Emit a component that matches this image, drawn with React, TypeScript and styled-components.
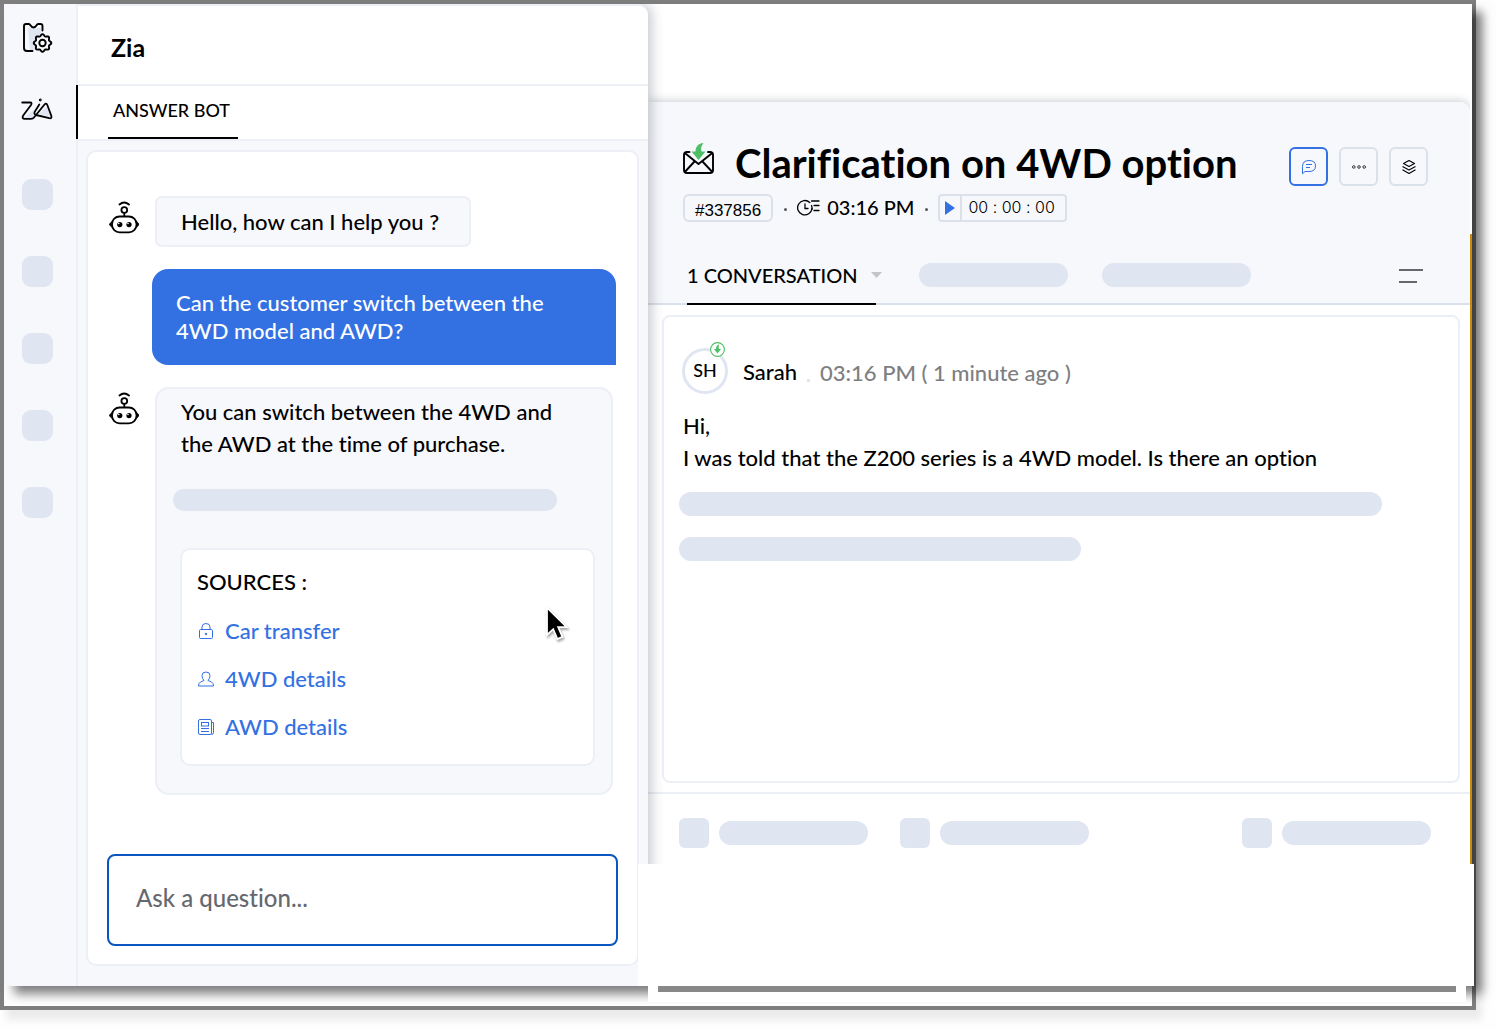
import React from "react";
import styled, { createGlobalStyle } from "styled-components";

const c = {
  mist: "#f7f8fc",
  line: "#eceff5",
  rule: "#dbe1ea",
  block: "#dfe5f1",
  blue: "#3371e3",
  deep: "#0a55bf",
  ink: "#000000",
  green: "#4fbf67",
};

const GlobalStyle = createGlobalStyle`
  *, *::before, *::after { box-sizing: border-box; }
  body {
    margin: 0;
    background: #fefefe;
    color: ${c.ink};
    font-family: Lato, "Liberation Sans", sans-serif;
    font-size: 22px;
    font-weight: 500;
    line-height: 32px;
    font-variant-ligatures: none;
  }
  button, input { font: inherit; color: inherit; font-variant-ligatures: none; }
  h1, h2, h3, p, ul { margin: 0; padding: 0; font-size: inherit; font-weight: inherit; }
  svg { display: block; flex: none; }
`;

const Frame = styled.div`
  display: flex;
  flex-direction: column;
  min-height: calc(100vh - 20px);
  margin: 0 20px 20px 0;
  border: 4px solid #7f7f7f;
  background: #fff;
  box-shadow: 6px 10px 8px rgba(0, 0, 0, 0.08);
`;

const Canvas = styled.div`
  flex: 1;
  display: flex;
  background: #fff;
  box-shadow: 10px 8px 10px rgba(0, 0, 0, 0.5);
`;

const Base = styled.div`
  position: relative;
  height: 16px;
  margin: 0 6px 4px 644px;
  padding: 0 10px;
  background: #fff;
`;

const BaseBar = styled.div`
  height: 6px;
  background: #888;
`;

/* left rail */

const Rail = styled.nav`
  width: 74px;
  padding-top: 7px;
  display: flex;
  flex-direction: column;
  background: ${c.mist};
  border-right: 2px solid ${c.line};
`;

const RailButton = styled.button<{ $active?: boolean }>`
  display: flex;
  align-items: center;
  height: 54px;
  margin: 0 -2px ${(p) => (p.$active ? 40 : 20)}px 0;
  padding: 0 0 ${(p) => (p.$active ? 4 : 0)}px 17px;
  border: 0;
  border-right: 2px solid ${(p) => (p.$active ? c.ink : "transparent")};
  background: none;
`;

const RailBlock = styled.div`
  width: 31px;
  height: 31px;
  margin: 0 0 46px 18px;
  border-radius: 9px;
  background: ${c.block};
`;

/* assistant panel */

const Panel = styled.section`
  position: relative;
  z-index: 1;
  width: 570px;
  display: flex;
  flex-direction: column;
  background: ${c.mist};
  border-top: 2px solid ${c.line};
  border-top-right-radius: 10px;
  box-shadow: 4px 0 12px rgba(40, 50, 70, 0.25);
  clip-path: inset(0 -20px 0 0);
`;

const PanelHeader = styled.header`
  height: 80px;
  display: flex;
  align-items: center;
  padding: 4px 33px 0;
  background: #fff;
  border-bottom: 2px solid ${c.line};
  border-top-right-radius: 10px;
`;

const PanelTitle = styled.h2`
  font-size: 25px;
  font-weight: 700;
`;

const PanelTabs = styled.div`
  height: 55px;
  padding: 0 30px;
  background: #fff;
  border-bottom: 2px solid ${c.line};
`;

const PanelTab = styled.button`
  height: 53px;
  padding: 0 8px 4px 5px;
  border: 0;
  border-bottom: 2px solid ${c.ink};
  background: none;
  font-size: 18px;
  line-height: 24px;
`;

const Chat = styled.div`
  flex: 1;
  display: flex;
  flex-direction: column;
  gap: 22px;
  margin: 9px 9px 20px 8px;
  padding: 44px 19px 18px;
  background: #fff;
  border: 2px solid ${c.line};
  border-radius: 10px;
`;

const BotRow = styled.div`
  display: flex;
  align-items: flex-start;
  gap: 16px;
  padding: 0 5px 0 2px;

  > svg { margin-top: 5px; }
`;

const Bubble = styled.div<{ $wide?: boolean }>`
  flex: ${(p) => (p.$wide ? "1" : "none")};
  padding: ${(p) => (p.$wide ? "7px 16px 27px" : "8px 30px 7px 24px")};
  background: ${c.mist};
  border: 2px solid ${c.line};
  border-radius: ${(p) => (p.$wide ? 14 : 7)}px;
`;

const BubbleText = styled.p`
  padding: 0 24px 0 8px;
  max-width: 420px;
`;

const UserBubble = styled.p`
  margin: 0 2px 0 45px;
  padding: 20px 64px 20px 24px;
  border-radius: 16px 16px 0 16px;
  background: ${c.blue};
  color: #fff;
  line-height: 28px;
`;

const Pill = styled.div<{ $w: string; $h?: number }>`
  width: ${(p) => p.$w};
  height: ${(p) => p.$h ?? 24}px;
  border-radius: 12px;
  background: ${c.block};
`;

const Sources = styled.div`
  position: relative;
  margin: 37px 0 0 7px;
  padding: 16px 15px 21px;
  background: #fff;
  border: 2px solid ${c.line};
  border-radius: 10px;
`;

const SourceList = styled.ul`
  list-style: none;
  margin-top: 17px;
  display: grid;
  gap: 16px;
`;

const SourceLink = styled.a`
  display: flex;
  align-items: center;
  gap: 10px;
  color: ${c.blue};
  text-decoration: none;
`;

const Pointer = styled.svg`
  position: absolute;
  right: 24px;
  top: 56px;
  filter: drop-shadow(1px 2px 1px rgba(0, 0, 0, 0.35));
`;

const Ask = styled.input`
  width: 100%;
  height: 92px;
  margin-top: auto;
  padding: 0 27px 6px;
  border: 2px solid ${c.deep};
  border-radius: 8px;
  background: #fff;
  font-size: 24px;
  outline: none;

  &::placeholder { color: #66686f; opacity: 1; }
`;

const BubblePillRow = styled.div`
  margin-top: 29px;
`;

/* ticket */

const Main = styled.main`
  flex: 1;
  min-width: 0;
  display: flex;
  flex-direction: column;
  padding-top: 98px;
`;

const TicketRow = styled.div`
  flex: 1;
  display: flex;
`;

const Ticket = styled.article`
  flex: 1;
  display: flex;
  flex-direction: column;
  background: #fff;
  border-top-right-radius: 10px;
  box-shadow: 0 -1px 8px rgba(40, 50, 70, 0.25);
  clip-path: inset(-12px 0 0 0);
`;

const Edge = styled.div`
  width: 2px;
  margin-top: 132px;
  background: #c98a08;
`;

const Blank = styled.div`
  position: relative;
  z-index: 2;
  height: 122px;
  margin: 0 -2px 0 -10px;
  background: #fff;
`;

const TicketHeader = styled.header`
  height: 203px;
  display: flex;
  flex-direction: column;
  padding-top: 35px;
  background: ${c.mist};
  border-bottom: 2px solid ${c.rule};
  border-top-right-radius: 10px;
`;

const TitleRow = styled.div`
  display: flex;
  align-items: flex-start;
  height: 54px;
  padding: 0 42px 0 34px;

  > svg { margin-top: 5px; }
`;

const TicketTitle = styled.h1`
  flex: 1;
  margin-left: 20px;
  font-size: 40px;
  line-height: 52px;
  font-weight: 700;
  white-space: nowrap;
`;

const Actions = styled.div`
  display: flex;
  gap: 11px;
  margin-top: 10px;
`;

const Action = styled.button<{ $on?: boolean }>`
  width: 39px;
  height: 39px;
  display: grid;
  place-items: center;
  padding: 0;
  border: 2px solid ${(p) => (p.$on ? c.blue : c.rule)};
  border-radius: 6px;
  background: ${c.mist};
`;

const Meta = styled.div`
  display: flex;
  align-items: center;
  height: 28px;
  margin-top: 3px;
  padding-left: 35px;
  font-size: 20px;
  line-height: 28px;
`;

const TicketId = styled.span`
  height: 28px;
  padding: 3px 10px 0;
  border: 2px solid ${c.rule};
  border-radius: 6px;
  font-family: "Liberation Sans", Arial, sans-serif;
  font-size: 17px;
  font-weight: 400;
  line-height: 24px;
`;

const Dot = styled.i`
  width: 3px;
  height: 3px;
  margin: 2px 10px 0 11px;
  border-radius: 50%;
  background: #555;
`;

const Time = styled.time`
  margin-left: 7px;
  padding-bottom: 2px;
`;

const Timer = styled.div`
  display: flex;
  height: 28px;
  border: 2px solid ${c.rule};
  border-radius: 4px;
  font-family: Inter, "Liberation Sans", sans-serif;
  font-size: 16px;
  font-weight: 300;
  line-height: 23px;
`;

const Play = styled.button`
  display: grid;
  place-items: center;
  width: 22px;
  padding: 0;
  border: 0;
  border-right: 2px solid ${c.rule};
  background: none;
`;

const TimerValue = styled.span`
  padding: 0 10px 0 6px;
`;

const TicketTabs = styled.div`
  display: flex;
  align-items: center;
  height: 57px;
  margin: auto 47px -2px 39px;
`;

const TicketTab = styled.button`
  display: flex;
  align-items: center;
  height: 57px;
  margin-right: 43px;
  padding: 0 0 2px;
  border: 0;
  border-bottom: 2px solid ${c.ink};
  background: none;
  font-size: 20px;
  white-space: nowrap;
`;

const Caret = styled.svg`
  margin: 0 -6px 0 13px;
`;

const TabPills = styled.div`
  flex: 1;
  display: flex;
  gap: 34px;
  padding-bottom: 4px;
`;

const MenuButton = styled.button`
  padding: 0 0 2px;
  border: 0;
  background: none;
`;

const Message = styled.div`
  flex: 1;
  margin: 10px 10px 9px 14px;
  padding: 24px 18px;
  background: #fff;
  border: 2px solid ${c.line};
  border-radius: 8px;
`;

const Sender = styled.div`
  display: flex;
  align-items: center;
  height: 60px;
  gap: 15px;
`;

const Avatar = styled.span`
  position: relative;
  width: 46px;
  height: 46px;
  border: 3px solid ${c.block};
  border-radius: 50%;
  background: #fff;
  font-size: 18px;
  line-height: 38px;
  text-align: center;
`;

const AvatarBadge = styled.svg`
  position: absolute;
  right: 0;
  top: -9px;
`;

const Name = styled.span`
  padding-top: 2px;
`;

const When = styled.time`
  padding-top: 3px;
  color: #7e7e81;
`;

const SenderDot = styled.i`
  width: 3px;
  height: 3px;
  margin: 18px -5px 0 -5px;
  background: ${c.block};
`;

const MessageText = styled.p`
  margin-top: 9px;
  padding-left: 1px;
`;

const MessagePills = styled.div`
  display: grid;
  gap: 21px;
  margin: 18px 0 0 -3px;
`;

const TicketFooter = styled.footer`
  display: flex;
  height: 72px;
  gap: 32px;
  padding: 8px 39px 0 31px;
  border-top: 2px solid ${c.line};
`;

const FooterItem = styled.div<{ $last?: boolean }>`
  display: flex;
  align-items: center;
  gap: 10px;
  margin-left: ${(p) => (p.$last ? "auto" : "0")};
`;

const Square = styled.div`
  width: 30px;
  height: 30px;
  border-radius: 6px;
  background: ${c.block};
`;

/* icons */

function gearPath(cx: number, cy: number, r: number, wave: number, teeth: number) {
  const pts: string[] = [];
  for (let i = 0; i < 96; i++) {
    const t = (i / 96) * Math.PI * 2;
    const rad = r + wave * Math.cos(teeth * t);
    pts.push(`${(cx + rad * Math.sin(t)).toFixed(2)} ${(cy - rad * Math.cos(t)).toFixed(2)}`);
  }
  return `M${pts.join("L")}Z`;
}

const TicketGearIcon = () => (
  <svg width="32" height="32" viewBox="0 0 32 32" fill="none" stroke="#000" strokeWidth="1.9" strokeLinecap="round" strokeLinejoin="round">
    <path d="M7 6h13v8l9 4-2 10H9z" fill={c.block} stroke="none" />
    <path d="M21.500 8.500V4q0-2-2-2h-2.500C15.500 2 15.500 5.500 12.500 5.500S9.500 2 8 2H5Q3 2 3 4v22q0 3 3 3h5.500" />
    <path d={gearPath(21.5, 21, 7.9, 0.9, 8)} fill={c.mist} />
    <circle cx="21.500" cy="21" r="3.200" />
  </svg>
);

const ZiaIcon = () => (
  <svg width="32" height="24" viewBox="0 0 32 24" fill="none" stroke="#000" strokeWidth="1.800" strokeLinecap="round" strokeLinejoin="round">
    <path d="M25 9l6 10-13-3zM3 20l13-11-3 11z" fill={c.block} stroke="none" />
    <path d="M1.200 4.500H9q2.500 0 1 2.500L2 17.800q-1.400 3 1.800 3H10q2 0 3.200-1.600L23.500 6.500q1.700-2 2.800.5l4 10.800q.8 3-2 2.400L15 17q-2.600-1-1-3.600L18.300 6.500" />
    <circle cx="19.300" cy="2" r=".5" fill="#000" />
  </svg>
);

const BotIcon = () => (
  <svg width="30" height="33" viewBox="0 0 30 33" fill="none" stroke="#000" strokeWidth="1.800" strokeLinecap="round">
    <path d="M10.500 3.500Q15-.5 20 3.500" />
    <circle cx="15.300" cy="9" r="2.900" />
    <path d="M15.300 12v3" />
    <rect x="3" y="15.500" width="24.500" height="15.800" rx="7.600" />
    <path d="M2.500 20.800L0 23.400l2.500 2.600zM28 20.800l2.300 2.600L28 26z" fill="#000" strokeWidth=".6" />
    <circle cx="10.800" cy="23.600" r="2.600" fill="#000" stroke="none" />
    <circle cx="20" cy="23.600" r="2.600" fill="#000" stroke="none" />
    <circle cx="9.800" cy="22.500" r=".8" fill="#fff" stroke="none" />
    <circle cx="19" cy="22.500" r=".8" fill="#fff" stroke="none" />
  </svg>
);

const thin = { width: 18, height: 18, viewBox: "0 0 18 18", fill: "none", stroke: c.blue, strokeWidth: 1 } as const;

const LockIcon = () => (
  <svg {...thin}>
    <rect x="2.500" y="7.500" width="13" height="9" rx="1.200" />
    <path d="M5 7.500V5Q5 1.500 9 1.500T13 5v2.500" />
    <circle cx="9" cy="12" r=".8" fill={c.blue} />
  </svg>
);

const PersonIcon = () => (
  <svg {...thin} strokeLinejoin="round">
    <path d="M7 10.500Q5 8.500 5 5.500 5 2 9 2t4 3.500q0 3-2 5l3.500 1.500q2 1 2 4h-15q0-3 2-4z" />
  </svg>
);

const NewsIcon = () => (
  <svg {...thin}>
    <rect x="1.500" y="1.500" width="13" height="15" rx="1.500" />
    <path d="M14.500 4.500h2v10q0 2-2 2M4 10.500h8M4 13.500h8" />
    <rect x="4.500" y="4.500" width="7" height="3.500" />
  </svg>
);

const MailIcon = () => (
  <svg width="33" height="33" viewBox="0 0 33 33" fill="none" stroke="#000" strokeWidth="1.900" strokeLinecap="round" strokeLinejoin="round">
    <path d="M7.500 10H5q-3 0-3 3v15q0 3 3 3h23q3 0 3-3V13q0-3-3-3h-2" />
    <path d="M2.800 11L16.500 22 30.300 11M2.800 30l9.700-10.500M30.300 30L20.500 19.500" />
    <path d="M21.500 1C16.500 1.500 13.500 4.500 13.500 9.500H9.500l7 8.500 7-8.500h-4C18.500 6 19.500 3.500 21.500 1z" fill={c.green} stroke="none" />
  </svg>
);

const ClockIcon = () => (
  <svg width="23" height="18" viewBox="0 0 23 18" fill="none" stroke="#000" strokeWidth="1.300" strokeLinecap="round">
    <path d="M12.800 3.500A7.200 7.200 0 1 0 15 9.500" />
    <path d="M14.500 6.500Q15.300 8 15 10.500M8 5v4.500h3M14.500 2h7.500M17 6.500h5M17 11.500h5" />
  </svg>
);

const ChatIcon = () => (
  <svg width="16" height="16" viewBox="0 0 16 16" fill="none" stroke={c.blue} strokeWidth="1">
    <path d="M1.500 14.800V7.500Q1.500 1.500 8 1.500t6.500 5.500-6.500 5.500H4zM5 5.500h6M5 8.500h4" />
  </svg>
);

const MoreIcon = () => (
  <svg width="16" height="6" viewBox="0 0 16 6" fill="none" stroke="#222" strokeWidth=".9">
    <circle cx="2.800" cy="3" r="1.300" />
    <circle cx="8" cy="3" r="1.300" />
    <circle cx="13.200" cy="3" r="1.300" />
  </svg>
);

const LayersIcon = () => (
  <svg width="16" height="16" viewBox="0 0 16 16" fill="none" stroke="#000" strokeWidth="1.100" strokeLinejoin="round">
    <path d="M8 1.500l5.500 3L8 7.500l-5.500-3zM1.500 7.500L8 11l6.500-3.500M1.500 10.800L8 14.500l6.500-3.700" />
  </svg>
);

const sources = [
  { label: "Car transfer", icon: <LockIcon /> },
  { label: "4WD details", icon: <PersonIcon /> },
  { label: "AWD details", icon: <NewsIcon /> },
];

export default function App() {
  return (
    <>
      <GlobalStyle />
      <Frame>
        <Canvas>
          <Rail>
            <RailButton aria-label="Ticket settings">
              <TicketGearIcon />
            </RailButton>
            <RailButton $active aria-label="Zia assistant">
              <ZiaIcon />
            </RailButton>
            {[0, 1, 2, 3, 4].map((i) => (
              <RailBlock key={i} />
            ))}
          </Rail>

          <Panel>
            <PanelHeader>
              <PanelTitle>Zia</PanelTitle>
            </PanelHeader>
            <PanelTabs>
              <PanelTab>ANSWER BOT</PanelTab>
            </PanelTabs>
            <Chat>
              <BotRow>
                <BotIcon />
                <Bubble>Hello, how can I help you ?</Bubble>
              </BotRow>
              <UserBubble>Can the customer switch between the 4WD model and AWD?</UserBubble>
              <BotRow>
                <BotIcon />
                <Bubble $wide>
                  <BubbleText>You can switch between the 4WD and the AWD at the time of purchase.</BubbleText>
                  <BubblePillRow>
                    <Pill $w="91%" $h={22} />
                  </BubblePillRow>
                  <Sources>
                    <h3>SOURCES :</h3>
                    <SourceList>
                      {sources.map((s) => (
                        <li key={s.label}>
                          <SourceLink href="#">
                            {s.icon}
                            {s.label}
                          </SourceLink>
                        </li>
                      ))}
                    </SourceList>
                    <Pointer width="24" height="36" viewBox="0 0 24 36">
                      <path d="M2 1.500v27.500l6.200-5.800 4.200 9.800 5-2.200-4.200-9.600h8.600z" fill="#000" stroke="#fff" strokeWidth="1.800" />
                    </Pointer>
                  </Sources>
                </Bubble>
              </BotRow>
              <Ask type="text" aria-label="Ask a question" placeholder="Ask a question..." />
            </Chat>
          </Panel>

          <Main>
            <TicketRow>
              <Ticket>
                <TicketHeader>
                  <TitleRow>
                    <MailIcon />
                    <TicketTitle>Clarification on 4WD option</TicketTitle>
                    <Actions>
                      <Action $on aria-label="Comments">
                        <ChatIcon />
                      </Action>
                      <Action aria-label="More">
                        <MoreIcon />
                      </Action>
                      <Action aria-label="Layers">
                        <LayersIcon />
                      </Action>
                    </Actions>
                  </TitleRow>
                  <Meta>
                    <TicketId>#337856</TicketId>
                    <Dot />
                    <ClockIcon />
                    <Time>03:16 PM</Time>
                    <Dot />
                    <Timer>
                      <Play aria-label="Start timer">
                        <svg width="10" height="14" viewBox="0 0 10 14">
                          <path d="M0 0l10 7-10 7z" fill={c.blue} />
                        </svg>
                      </Play>
                      <TimerValue>00 : 00 : 00</TimerValue>
                    </Timer>
                  </Meta>
                  <TicketTabs>
                    <TicketTab>
                      1 CONVERSATION
                      <Caret width="11" height="6" viewBox="0 0 11 6">
                        <path d="M0 0h11L5.500 6z" fill="#c4c4c6" />
                      </Caret>
                    </TicketTab>
                    <TabPills>
                      <Pill $w="149px" />
                      <Pill $w="149px" />
                    </TabPills>
                    <MenuButton aria-label="Menu">
                      <svg width="24" height="16" viewBox="0 0 24 16" stroke="#66676c" strokeWidth="2">
                        <path d="M0 2h24M0 14h18" />
                      </svg>
                    </MenuButton>
                  </TicketTabs>
                </TicketHeader>

                <Message>
                  <Sender>
                    <Avatar>
                      SH
                      <AvatarBadge width="15" height="15" viewBox="0 0 15 15">
                        <circle cx="7.500" cy="7.500" r="6.900" fill="#fff" stroke={c.green} strokeWidth="1.100" />
                        <path d="M9 2.500C7 3 6 4.500 6 7H4l3.500 4.500L11 7H9C8.500 5.500 8.500 4 9 2.500z" fill={c.green} />
                      </AvatarBadge>
                    </Avatar>
                    <Name>Sarah</Name>
                    <SenderDot />
                    <When>03:16 PM ( 1 minute ago )</When>
                  </Sender>
                  <MessageText>
                    Hi,
                    <br />I was told that the Z200 series is a 4WD model. Is there an option
                  </MessageText>
                  <MessagePills>
                    <Pill $w="calc(100% - 58px)" />
                    <Pill $w="402px" />
                  </MessagePills>
                </Message>

                <TicketFooter>
                  {[0, 1, 2].map((i) => (
                    <FooterItem key={i} $last={i === 2}>
                      <Square />
                      <Pill $w="149px" />
                    </FooterItem>
                  ))}
                </TicketFooter>
              </Ticket>
              <Edge />
            </TicketRow>
            <Blank />
          </Main>
        </Canvas>
        <Base>
          <BaseBar />
        </Base>
      </Frame>
    </>
  );
}
